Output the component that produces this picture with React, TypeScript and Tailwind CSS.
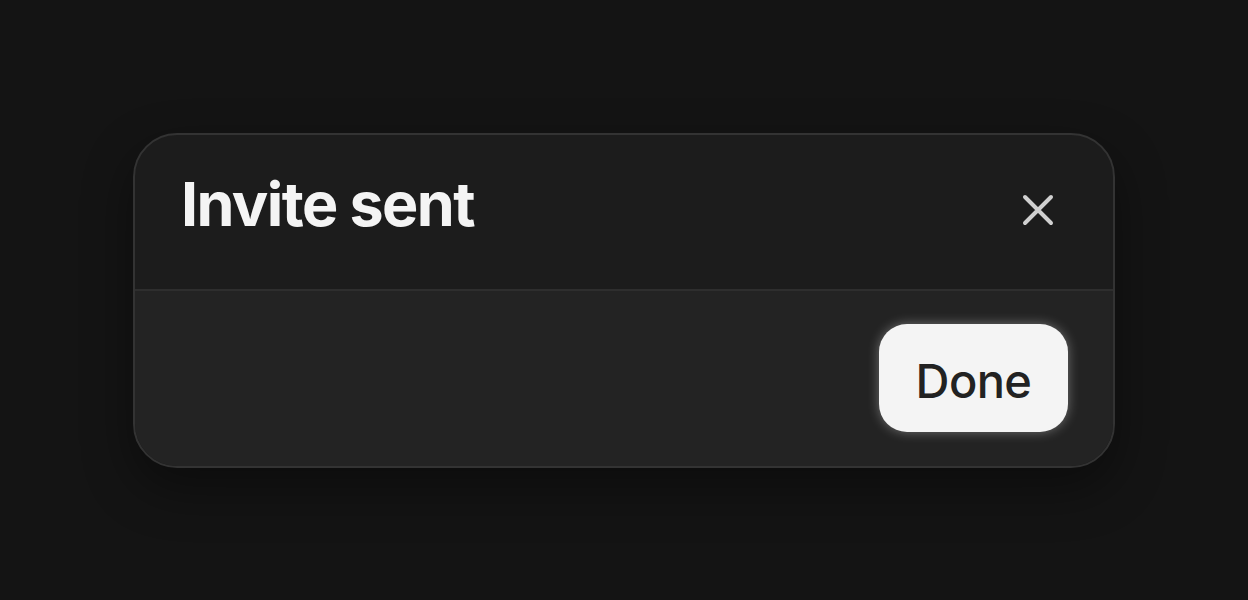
export default function App() {
  return (
    <div className="flex h-[600px] w-full items-center justify-center bg-[#141414] font-['Inter',sans-serif]">
      <div className="w-[982px] overflow-hidden rounded-[44px] border-2 border-[#333333] bg-[#1c1c1c] shadow-[0_20px_50px_rgba(0,0,0,0.4)]">
        <div className="flex h-[154px] items-start justify-between pl-[46px] pr-[53px]">
          <h2 className="mt-[32px] text-[61px] font-bold leading-[74px] tracking-[-1.6px] text-[#f4f4f4]">
            Invite sent
          </h2>
          <button className="mt-[53px] flex h-[44px] w-[44px] items-center justify-center text-[#d0d0d0]">
            <svg width="32" height="32" viewBox="0 0 32 32" fill="none" stroke="currentColor" strokeWidth="4" strokeLinecap="round">
              <path d="M3 3L29 29M29 3L3 29" />
            </svg>
          </button>
        </div>
        <div className="flex h-[177px] items-center justify-end border-t-2 border-[#2e2e2e] bg-[#232323] pr-[45px]">
          <button className="flex h-[108px] w-[189px] items-center justify-center rounded-[28px] bg-[#f4f4f4] pt-[7px] text-[47px] font-medium tracking-[-0.6px] text-[#222] shadow-[0_0_12px_rgba(255,255,255,0.35)]">
            Done
          </button>
        </div>
      </div>
    </div>
  );
}
